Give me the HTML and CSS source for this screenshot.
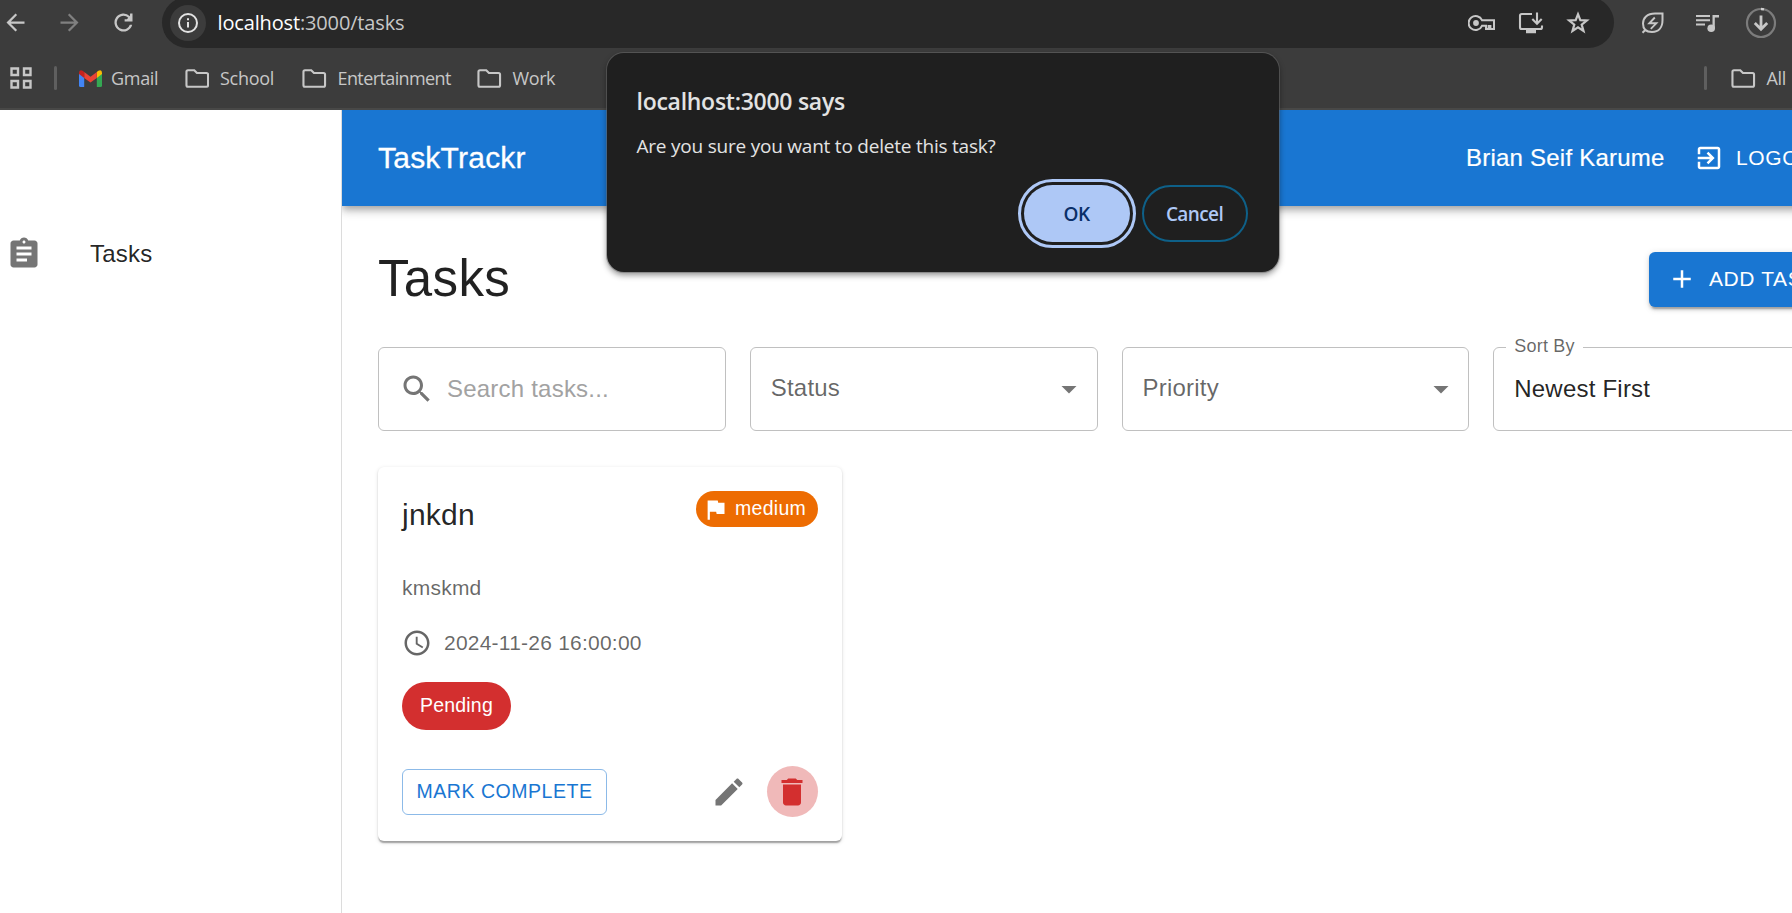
FILE: index.html
```html
<!DOCTYPE html>
<html lang="en">
<head>
<meta charset="utf-8">
<title>TaskTrackr</title>
<link rel="stylesheet" href="styles.css">
</head>
<body>
<header class="browser">
  <div class="toolbar">
    <svg class="nav-icon" viewBox="0 0 24 24"><path d="M20 11H7.8l5.6-5.6L12 4l-8 8 8 8 1.4-1.4L7.8 13H20z"/></svg>
    <svg class="nav-icon dim" viewBox="0 0 24 24"><path d="M4 11h12.2l-5.6-5.6L12 4l8 8-8 8-1.4-1.4 5.6-5.6H4z"/></svg>
    <svg class="nav-icon" viewBox="0 0 24 24"><path d="M17.65 6.35A8 8 0 1 0 19.73 14h-2.08A6 6 0 1 1 12 6c1.66 0 3.14.69 4.22 1.78L15 9H13V11h7V4h-2.100z" /></svg>
    <div class="omnibox">
      <span class="site-info"><svg width="22" height="22" viewBox="0 0 22 22" fill="none" stroke="#e3e3e3" stroke-width="2"><circle cx="11" cy="11" r="9"/><path d="M11 10v5.5M11 6.3v2"/></svg></span>
      <span class="url"><b>localhost</b>:3000/tasks</span>
      <span class="omni-actions">
        <svg width="28" height="18" viewBox="0 0 28 18" fill="none" stroke="#c7c7c7" stroke-width="2"><path d="M14 6.2A7 7 0 1 0 14 11.8H18V15H20.6V12H22.4V15H26V6.2Z"/><circle cx="8" cy="9" r="2.9" fill="#c7c7c7" stroke="none"/></svg>
        <svg width="26" height="24" viewBox="0 0 26 24" fill="none" stroke="#c7c7c7" stroke-width="2.1"><path d="M14 3H3.8Q2 3 2 4.800V16.200Q2 18 3.800 18H22.200Q24 18 24 16.200V14.500M19 1.500V12M14.300 8L19 12.700L23.700 8"/><path d="M8 20.500H18" stroke-width="3.500"/></svg>
        <svg width="24" height="24" viewBox="0 0 24 24" fill="none" stroke="#c7c7c7" stroke-width="2.200"><path d="M12 3.200L14.300 9.200L20.800 9.500L15.700 13.600L17.500 20L12 16.400L6.500 20L8.300 13.600L3.200 9.500L9.700 9.200Z"/></svg>
      </span>
    </div>
    <div class="extensions">
      <svg width="24" height="24" viewBox="0 0 24 24" fill="none" stroke="#c7c7c7" stroke-width="2"><path d="M21.500 2.500H14C6 2.500 2 7 2 12.500C2 18.500 6 21 11 21C18 21 21.500 16 21.500 9ZM5 18.300L1.500 21.800"/><path d="M13.800 6.500L8.300 12.300H15.300L9.800 17.800" stroke-width="1.900"/></svg>
      <svg width="26" height="22" viewBox="0 0 26 22" fill="#c7c7c7"><path d="M1 3h14v2H1zM1 7.300h14v2H1zM1 11.600h9v2H1zM17.500 3H24v2.500H19.800V16H17.500z"/><circle cx="16.200" cy="16.200" r="3.800"/></svg>
      <svg width="32" height="32" viewBox="0 0 32 32" fill="none"><circle cx="16" cy="16" r="14" stroke="#7c7c7c" stroke-width="2.200"/><path d="M16 2A14 14 0 0 1 19 2.300" stroke="#d0d0d0" stroke-width="2.400"/><path d="M16 8.500V22M9.800 16L16 22.200L22.200 16" stroke="#c7c7c7" stroke-width="2.800"/></svg>
    </div>
  </div>
  <div class="bookmarks">
    <svg class="apps" width="22" height="22" viewBox="0 0 22 22" fill="none" stroke="#c7c7c7" stroke-width="2.400"><path d="M1.500 1.500H8V8H1.500zM14 1.500h6.500V8H14zM1.500 14H8v6.500H1.500zM14 14h6.500v6.500H14z"/></svg>
    <i class="divider"></i>
    <svg class="gmail" width="23" height="17" viewBox="0 0 23 17"><path fill="#4285f4" d="M0 3L5.200 7V17H1.500Q0 17 0 15.500z"/><path fill="#34a853" d="M17.800 7L23 3V15.500Q23 17 21.500 17H17.800z"/><path fill="#fbbc04" d="M17.800 2L19.400.800Q23-.800 23 3V4L17.800 8z"/><path fill="#ea4335" d="M5.200 2L11.500 6.700L17.800 2V8L11.500 12.600L5.200 8z"/><path fill="#c5221f" d="M0 3Q0-.800 3.600.800L5.200 2V8L0 4z"/></svg>
    <span class="bm gm">Gmail</span>
    <svg class="folder" viewBox="0 0 24 19"><path d="M2.700 1.200H9L11.700 4H21.300Q22.800 4 22.800 5.500V16.300Q22.800 17.800 21.300 17.800H2.700Q1.200 17.800 1.200 16.300V2.700Q1.200 1.200 2.700 1.200Z"/></svg>
    <span class="bm sc">School</span>
    <svg class="folder" viewBox="0 0 24 19"><path d="M2.700 1.200H9L11.700 4H21.300Q22.800 4 22.800 5.500V16.300Q22.800 17.800 21.300 17.800H2.700Q1.200 17.800 1.200 16.300V2.700Q1.200 1.200 2.700 1.200Z"/></svg>
    <span class="bm en">Entertainment</span>
    <svg class="folder" viewBox="0 0 24 19"><path d="M2.700 1.200H9L11.700 4H21.300Q22.800 4 22.800 5.500V16.300Q22.800 17.800 21.300 17.800H2.700Q1.200 17.800 1.200 16.300V2.700Q1.200 1.200 2.700 1.200Z"/></svg>
    <span class="bm wo">Work</span>
    <span class="all">
      <i class="divider"></i>
      <svg class="folder" viewBox="0 0 24 19"><path d="M2.700 1.200H9L11.700 4H21.300Q22.800 4 22.800 5.500V16.300Q22.800 17.800 21.300 17.800H2.700Q1.200 17.800 1.200 16.300V2.700Q1.200 1.200 2.700 1.200Z"/></svg>
      <span class="bm">All</span>
    </span>
  </div>
</header>

<div class="app">
  <nav class="sidebar">
    <a class="side-item">
      <svg class="icon" viewBox="0 0 24 24"><path d="M19 3h-4.180C14.400 1.840 13.300 1 12 1c-1.300 0-2.400.840-2.820 2H5c-1.100 0-2 .900-2 2v14c0 1.100.900 2 2 2h14c1.100 0 2-.900 2-2V5c0-1.100-.900-2-2-2zm-7 0c.550 0 1 .450 1 1s-.450 1-1 1-1-.450-1-1 .450-1 1-1zm2 14H7v-2h7v2zm3-4H7v-2h10v2zm0-4H7V7h10v2z"/></svg>
      <span>Tasks</span>
    </a>
  </nav>
  <div class="main">
    <div class="appbar">
      <h1 class="brand">TaskTrackr</h1>
      <span class="user">Brian Seif Karume</span>
      <span class="logout"><svg width="30" height="30" viewBox="0 0 24 24" fill="#fff"><path d="M10.090 15.590L11.500 17l5-5-5-5-1.410 1.410L12.670 11H3v2h9.670l-2.580 2.590zM19 3H5c-1.110 0-2 .900-2 2v4h2V5h14v14H5v-4H3v4c0 1.100.890 2 2 2h14c1.100 0 2-.900 2-2V5c0-1.100-.900-2-2-2z"/></svg>LOGOUT</span>
    </div>
    <div class="content">
      <div class="heading">
        <h2>Tasks</h2>
        <button class="add"><svg width="30" height="30" viewBox="0 0 24 24" fill="#fff"><path d="M19 13h-6v6h-2v-6H5v-2h6V5h2v6h6v2z"/></svg>ADD TASK</button>
      </div>
      <div class="filters">
        <div class="field search">
          <svg class="icon" viewBox="0 0 24 24"><path d="M15.500 14h-.790l-.280-.270C15.410 12.590 16 11.110 16 9.500 16 5.910 13.090 3 9.500 3S3 5.910 3 9.500 5.910 16 9.500 16c1.610 0 3.090-.590 4.230-1.570l.270.280v.790l5 4.990L20.490 19l-4.990-5zm-6 0C7.010 14 5 11.990 5 9.500S7.010 5 9.500 5 14 7.010 14 9.500 11.990 14 9.500 14z"/></svg>
          <span class="placeholder">Search tasks...</span>
        </div>
        <div class="field select"><span class="label">Status</span><svg class="icon" viewBox="0 0 24 24"><path d="M7 10l5 5 5-5z"/></svg></div>
        <div class="field select"><span class="label">Priority</span><svg class="icon" viewBox="0 0 24 24"><path d="M7 10l5 5 5-5z"/></svg></div>
        <div class="field select"><span class="float-label">Sort By</span><span class="value">Newest First</span></div>
      </div>
      <article class="card">
        <div class="card-top">
          <h3>jnkdn</h3>
          <span class="chip medium"><svg width="27" height="27" viewBox="0 0 24 24" fill="#fff"><path d="M14.400 6L14 4H5v17h2v-7h5.600l.400 2h7V6z"/></svg><span>medium</span></span>
        </div>
        <p class="desc">kmskmd</p>
        <div class="due"><svg width="30" height="30" viewBox="0 0 24 24"><path d="M11.990 2C6.470 2 2 6.480 2 12s4.470 10 9.990 10C17.520 22 22 17.520 22 12S17.520 2 11.990 2zM12 20c-4.420 0-8-3.580-8-8s3.580-8 8-8 8 3.580 8 8-3.580 8-8 8zm.500-13H11v6l5.250 3.150.750-1.230-4.500-2.670z"/></svg>2024-11-26 16:00:00</div>
        <span class="chip pending">Pending</span>
        <div class="actions">
          <button class="complete">MARK COMPLETE</button>
          <svg class="icon edit" viewBox="0 0 24 24"><path d="M3 17.250V21h3.750L17.810 9.940l-3.750-3.750L3 17.250zM20.710 7.040c.390-.390.390-1.020 0-1.410l-2.340-2.340c-.390-.390-1.020-.390-1.410 0l-1.830 1.830 3.750 3.750 1.830-1.830z"/></svg>
          <span class="delete"><svg width="36" height="36" viewBox="0 0 24 24" fill="#d32f2f"><path d="M6 19c0 1.100.900 2 2 2h8c1.100 0 2-.900 2-2V7H6v12zM19 4h-3.500l-1-1h-5l-1 1H5v2h14V4z"/></svg></span>
        </div>
      </article>
    </div>
  </div>
</div>

<div class="dialog">
  <div class="dialog-title"><span>localhost:3000 says</span></div>
  <div class="dialog-text"><span>Are you sure you want to delete this task?</span></div>
  <div class="dialog-buttons">
    <button class="ok">OK</button>
    <button class="cancel">Cancel</button>
  </div>
</div>
</body>
</html>
```
FILE: styles.css
```css
* { box-sizing: border-box; }
html, body { height: 100%; }
body { margin: 0; overflow: hidden; background: #fff; color: rgba(0,0,0,.87); font-family: "Liberation Sans", Arial, sans-serif; display: flex; flex-direction: column; }
h1, h2, h3, p { margin: 0; font-weight: 400; }
button { border: 0; font-family: inherit; white-space: nowrap; }
svg { display: block; flex: none; }
.icon { width: 36px; height: 36px; fill: #757575; }

/* browser chrome */
.browser { flex: none; height: 110px; background: #3c3c3c; border-bottom: 2px solid #484847; font-family: "Open Sans", "Noto Sans", sans-serif; color: #c7c7c7; overflow: hidden; }
.toolbar { display: flex; align-items: center; height: 51px; margin-top: -3px; padding-left: 1.5px; }
.nav-icon { width: 27px; height: 27px; margin-right: 27px; fill: #c7c7c7; }
.nav-icon.dim { fill: #808080; }
.omnibox { display: flex; align-items: center; width: 1452px; height: 51px; margin-left: -1.500px; border-radius: 26px; background: #282828; padding: 0 24px 0 7.500px; }
.site-info { display: grid; place-items: center; width: 36px; height: 36px; border-radius: 50%; background: #3c3c3c; }
.url { margin-left: 12px; font-size: 20px; line-height: 30px; letter-spacing: -.150px; white-space: nowrap; }
.url b { font-weight: 400; color: #fff; }
.omni-actions { display: flex; align-items: center; gap: 22px; margin-left: auto; }
.extensions { display: flex; align-items: center; margin-left: 27px; gap: 30px; }
.extensions svg:last-child { margin-left: -6px; }
.bookmarks { display: flex; align-items: center; height: 60px; padding-left: 10px; font-size: 18px; }
.divider { width: 3px; height: 24px; border-radius: 2px; background: #5f5f5f; flex: none; }
.apps { margin-right: 22px; }
.gmail { margin-left: 21.500px; margin-right: 10px; }
.folder { width: 24.500px; height: 19px; fill: none; stroke: #c7c7c7; stroke-width: 2.100; }
.bm { margin-left: 11px; margin-top: -1px; white-space: nowrap; line-height: 28px; letter-spacing: -.3px; }
.gm { margin-left: -.500px; width: 73.500px; }
.sc { width: 82px; }
.en { width: 139.500px; letter-spacing: -.6px; }
.wo { width: 60px; letter-spacing: -.4px; }
.all { display: flex; align-items: center; margin-left: auto; width: 88px; }
.all .folder { margin-left: 24px; }

/* application */
.app { flex: 1; display: flex; min-height: 0; }
.sidebar { flex: none; width: 342px; border-right: 1px solid #dcdcdc; padding-top: 126px; }
.side-item { display: flex; align-items: center; gap: 48px; padding-left: 6px; height: 36px; font-size: 24px; letter-spacing: .009em; }
.main { flex: none; width: 1535px; }
.appbar { display: flex; align-items: center; height: 96px; padding: 0 36px; background: #1976d2; color: #fff; box-shadow: 0 3px 6px -1.500px rgba(0,0,0,.2), 0 6px 7.500px rgba(0,0,0,.14), 0 1.500px 15px rgba(0,0,0,.12); clip-path: inset(0 0 -24px 0); }
.brand { flex: 1; font-size: 30px; letter-spacing: .0075em; -webkit-text-stroke: .3px #fff; margin-top: -1px; }
.user { font-size: 24px; letter-spacing: .009em; -webkit-text-stroke: .2px #fff; }
.logout { display: flex; align-items: center; gap: 12px; width: 147px; margin-left: 29.500px; font-size: 21px; letter-spacing: .02857em; }
.content { padding: 36px; }
.heading { display: flex; justify-content: space-between; align-items: center; height: 75px; margin-bottom: 30px; }
.heading h2 { font-size: 51px; letter-spacing: .00735em; line-height: 63px; margin-top: -2px; }
.add { display: flex; align-items: center; gap: 12px; width: 192px; height: 55px; padding: 0 18px 1px; border-radius: 6px; background: #1976d2; color: #fff; font-size: 21px; letter-spacing: .02857em; box-shadow: 0 4.500px 1.500px -3px rgba(0,0,0,.2), 0 3px 3px rgba(0,0,0,.14), 0 1.500px 7.500px rgba(0,0,0,.12); }
.filters { display: grid; grid-template-columns: repeat(4, 1fr); gap: 24px; }
.field { position: relative; display: flex; align-items: center; height: 84px; border: 1px solid #c0c0c0; border-radius: 6px; font-size: 24px; letter-spacing: .009em; padding: 0 9.500px 0 20px; }
.placeholder { margin-left: 12px; color: #a2a2a2; }
.select { justify-content: space-between; }
.label { color: rgba(0,0,0,.6); margin-top: -2px; }
.float-label { position: absolute; left: 12px; top: -15px; padding: 0 8px; background: #fff; color: rgba(0,0,0,.6); font-size: 18px; line-height: 26px; }
.card { width: 464px; height: 374px; margin-top: 36px; padding: 24px; border-radius: 6px; background: #fff; box-shadow: 0 3px 1.500px -1.500px rgba(0,0,0,.2), 0 1.500px 1.500px rgba(0,0,0,.14), 0 1.500px 4.500px rgba(0,0,0,.12); }
.card-top { display: flex; justify-content: space-between; height: 82px; }
.card-top h3 { font-size: 30px; line-height: 48px; letter-spacing: .0075em; }
.chip { display: flex; align-items: center; color: #fff; font-size: 19.500px; }
.medium { width: 122px; height: 36px; padding-left: 6px; gap: 6px; border-radius: 18px; background: #ed6c02; letter-spacing: .015em; }
.medium span { margin-top: -2px; }
.pending { width: 109px; height: 48px; padding: 0 0 2px 18px; margin-top: 24px; border-radius: 24px; background: #d32f2f; letter-spacing: .01em; }
.desc { font-size: 21px; line-height: 30px; letter-spacing: .0107em; color: rgba(0,0,0,.6); margin-bottom: 25px; }
.due { display: flex; align-items: center; gap: 12px; height: 30px; font-size: 21px; letter-spacing: .0107em; color: rgba(0,0,0,.6); fill: #666; }
.actions { display: flex; align-items: center; margin-top: 36px; height: 51px; }
.complete { width: 205px; height: 46px; margin-right: auto; border: 1px solid rgba(25,118,210,.5); border-radius: 6px; background: none; color: #1976d2; font-size: 19.500px; letter-spacing: .028em; padding: 0 0 1px; }
.edit { margin-right: 20px; }
.delete { display: flex; align-items: center; padding-left: 7px; width: 51px; height: 51px; border-radius: 50%; background: #f0b9b9; }

/* confirm dialog */
.dialog { position: absolute; left: 606.500px; top: 53px; width: 672.500px; height: 219px; padding: 30px 31px 0 30px; border-radius: 17px; background: #1f1f1f; color: #e3e3e3; font-family: "Open Sans", "Noto Sans", sans-serif; box-shadow: 0 0 0 1px rgba(110,110,110,.5), 0 3px 6px rgba(0,0,0,.45); }
.dialog-title { font-size: 23px; font-weight: 600; line-height: 36px; letter-spacing: -.270px; }
.dialog-text { margin-top: 13px; font-size: 19px; line-height: 28px; letter-spacing: -.220px; }
.dialog-buttons { display: flex; justify-content: flex-end; gap: 12px; margin-top: 25px; }
.dialog-buttons button { width: 106px; height: 57px; border-radius: 29px; font-size: 19px; font-weight: 600; letter-spacing: -.6px; padding: 0 1px 0 0; }
.ok { background: #aec8f6; color: #0a3069; outline: 3px solid #aec8f6; outline-offset: 3px; }
.cancel { background: none; color: #aec8f6; border: 2px solid #0e6088; }
```
